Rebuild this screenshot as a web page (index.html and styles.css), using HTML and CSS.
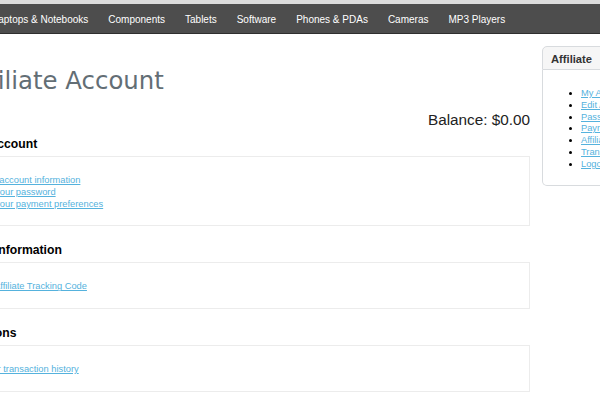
FILE: index.html
```html
<!DOCTYPE html>
<html lang="en">
<head>
    <meta charset="UTF-8">
    <title>My Affiliate Account</title>
    <link rel="stylesheet" href="styles.css">
</head>
<body>
    <div class="topline"></div>
    <div class="container">
        <div class="menu">
            <a href="#">Desktops</a>
            <a href="#">Laptops &amp; Notebooks</a>
            <a href="#">Components</a>
            <a href="#">Tablets</a>
            <a href="#">Software</a>
            <a href="#">Phones &amp; PDAs</a>
            <a href="#">Cameras</a>
            <a href="#">MP3 Players</a>
        </div>

        <div class="columns">
            <div class="content">
                <h1>My Affiliate Account</h1>
                <div class="balance">Balance: $0.00</div>

                <h2>My Affiliate Account</h2>
                <div class="box">
                    <ul>
                        <li><a href="#">Edit your account information</a></li>
                        <li><a href="#">Change your password</a></li>
                        <li><a href="#">Change your payment preferences</a></li>
                    </ul>
                </div>

                <h2>My Tracking Information</h2>
                <div class="box">
                    <ul>
                        <li><a href="#">Custom Affiliate Tracking Code</a></li>
                    </ul>
                </div>

                <h2>My Transactions</h2>
                <div class="box">
                    <ul>
                        <li><a href="#">View your transaction history</a></li>
                    </ul>
                </div>
            </div>

            <div class="column-right">
                <div class="side-box">
                    <div class="side-heading">Affiliate</div>
                    <div class="side-content">
                        <ul>
                            <li><a href="#">My Account</a></li>
                            <li><a href="#">Edit Account</a></li>
                            <li><a href="#">Password</a></li>
                            <li><a href="#">Payment Options</a></li>
                            <li><a href="#">Affiliate Tracking</a></li>
                            <li><a href="#">Transactions</a></li>
                            <li><a href="#">Logout</a></li>
                        </ul>
                    </div>
                </div>
            </div>
        </div>
    </div>
</body>
</html>
```

FILE: styles.css
```css
body {
    margin: 0;
    font-family: "Liberation Sans", Arial, sans-serif;
    color: #000000;
    background-color: #ffffff;
    overflow: hidden;
}

a {
    color: #55b2dd;
}

.topline {
    height: 4px;
    background-color: #dcdcdc;
}

.container {
    width: 761px;
    margin-left: -79px;
}

.menu {
    display: flex;
    height: 29px;
    background-color: #4d4d4d;
    border-bottom: 1px solid #2e2e2e;
}

.menu a {
    color: #ffffff;
    font-size: 10px;
    line-height: 27px;
    padding: 2px 10px 0 10px;
    text-decoration: none;
    white-space: nowrap;
}

.columns {
    display: flex;
    align-items: flex-start;
    gap: 12px;
}

.content {
    width: 609px;
    flex-shrink: 0;
}

h1 {
    font-family: "DejaVu Sans", Verdana, sans-serif;
    font-size: 24.4px;
    line-height: 30px;
    font-weight: normal;
    color: #636e75;
    margin: 32px 0 15px 0;
}

.balance {
    text-align: right;
    font-size: 15.3px;
    line-height: 18px;
    color: #222222;
    margin-bottom: 8px;
}

h2 {
    font-size: 12.2px;
    line-height: 14px;
    font-weight: bold;
    margin: 0 0 5px 0;
}

.box {
    border: 1px solid #ececec;
    padding: 18px 8px 15px 8px;
    margin-bottom: 17px;
}

.box ul {
    list-style: none;
    margin: 0;
    padding: 0 0 0 30px;
}

.box li,
.side-content li {
    font-size: 9.3px;
    line-height: 11.8px;
}

.column-right {
    width: 140px;
    flex-shrink: 0;
    margin-top: 12px;
}

.side-heading {
    border: 1px solid #d8dbde;
    border-radius: 5px 5px 0 0;
    background-color: #f6f6f6;
    font-size: 11.2px;
    font-weight: bold;
    line-height: 14px;
    color: #333333;
    padding: 5px 8px 3px 8px;
}

.side-content {
    border: 1px solid #d8dbde;
    border-top: none;
    border-radius: 0 0 5px 5px;
    padding: 18px 8px 14px 8px;
}

.side-content ul {
    margin: 0;
    padding-left: 30px;
}
```
